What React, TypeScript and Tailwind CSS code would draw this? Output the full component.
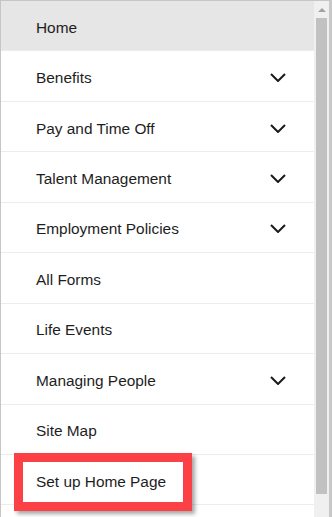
type Item = { label: string; hasChildren?: boolean; active?: boolean };

const ITEMS: Item[] = [
  { label: "Home", active: true },
  { label: "Benefits", hasChildren: true },
  { label: "Pay and Time Off", hasChildren: true },
  { label: "Talent Management", hasChildren: true },
  { label: "Employment Policies", hasChildren: true },
  { label: "All Forms" },
  { label: "Life Events" },
  { label: "Managing People", hasChildren: true },
  { label: "Site Map" },
  { label: "Set up Home Page" },
];

function Chevron() {
  return (
    <svg viewBox="0 0 16 9" className="h-[9px] w-[16px]" fill="none" aria-hidden="true">
      <path d="M1 1l7 7 7-7" stroke="#1a1a1a" strokeWidth="2" />
    </svg>
  );
}

function NavRow({ label, hasChildren, active }: Item) {
  return (
    <div
      className={`flex h-[50.45px] shrink-0 items-center justify-between border-b border-[#ececec] pl-[35px] pr-[28px] pt-[3px] ${
        active ? "bg-[#e6e6e6]" : "bg-white"
      }`}
    >
      <span className="text-[15.4px] text-[#1e1e1e]">{label}</span>
      {hasChildren && <Chevron />}
    </div>
  );
}

export default function App() {
  return (
    <div
      className="relative flex h-[517px] w-[332px] overflow-hidden border-t border-l border-[#c6c6c6] bg-white"
      style={{ fontFamily: '"Liberation Sans", Arial, sans-serif' }}
    >
      <div className="flex min-w-0 flex-1 flex-col">
        {ITEMS.map((item) => (
          <NavRow key={item.label} {...item} />
        ))}
      </div>

      {/* scrollbar */}
      <div className="flex w-[15px] shrink-0 flex-col bg-[#f0f0f0]">
        <div className="flex h-[17px] items-center justify-center">
          <svg viewBox="0 0 8 4" className="h-[4px] w-[8px] fill-[#a3a3a3]">
            <path d="M0 4 4 0 8 4z" />
          </svg>
        </div>
        <div className="mx-[2px] h-[476px] bg-[#c1c1c1]" />
      </div>
      <div className="w-[3px] shrink-0 bg-[#c8c8c8]" />

      {/* highlight annotation */}
      <div className="pointer-events-none absolute left-[13px] top-[452px] h-[58px] w-[178px] border-[9px] border-[#fc4146] shadow-[3px_3px_4px_rgba(0,0,0,0.35)]" />
    </div>
  );
}
